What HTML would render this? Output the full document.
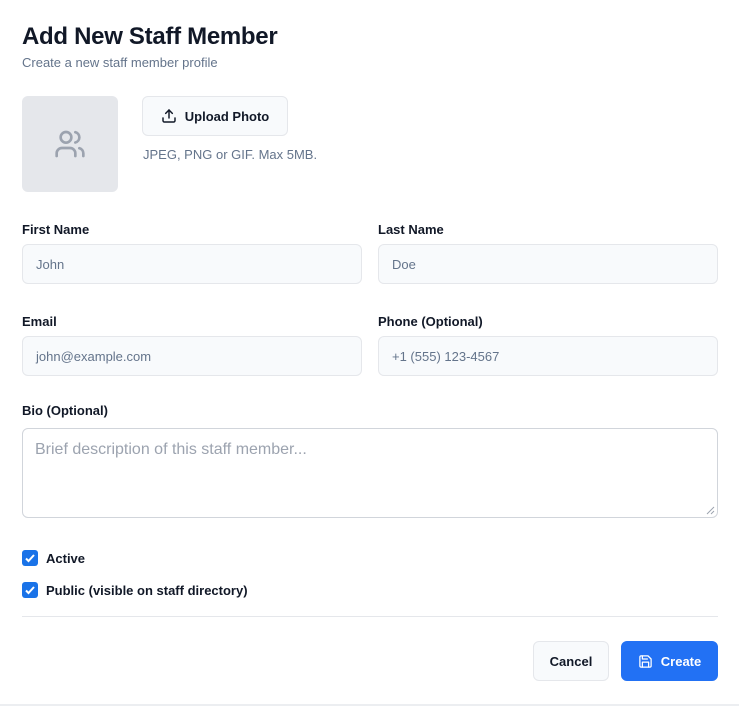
<!DOCTYPE html>
<html><head><style>
*{box-sizing:border-box;margin:0;padding:0}
body{width:739px;height:706px;background:#fff;font-family:"Liberation Sans",sans-serif;color:#111827;position:relative;overflow:hidden}
.a{position:absolute}
h1{position:absolute;left:22px;top:23px;font-size:24px;font-weight:700;letter-spacing:-0.3px}
.sub{left:22px;top:55px;font-size:13px;color:#64748b}
.av{left:22px;top:96px;width:96px;height:96px;background:#e5e7eb;border-radius:6px;display:flex;align-items:center;justify-content:center}
.btn{border:1px solid #e5e7eb;background:#f8fafc;border-radius:6px;font-size:13px;font-weight:700;display:flex;align-items:center;justify-content:center;gap:8px}
.lab{font-size:13px;font-weight:700}
.in{height:40px;border:1px solid #e5e7eb;background:#f8fafc;border-radius:6px;font-size:13px;color:#64748b;padding-left:13px;display:flex;align-items:center}
.cb{width:16px;height:16px;background:#1a73e8;border-radius:3px;display:flex;align-items:center;justify-content:center}
</style></head><body>
<h1>Add New Staff Member</h1>
<div class="a sub">Create a new staff member profile</div>
<div class="a av"><svg width="32" height="32" viewBox="0 0 24 24" fill="none" stroke="#9ca3af" stroke-width="2" stroke-linecap="round" stroke-linejoin="round"><path d="M16 21v-2a4 4 0 0 0-4-4H6a4 4 0 0 0-4 4v2"/><circle cx="9" cy="7" r="4"/><path d="M22 21v-2a4 4 0 0 0-3-3.87"/><path d="M16 3.13a4 4 0 0 1 0 7.75"/></svg></div>
<div class="a btn" style="left:142px;top:96px;width:146px;height:40px"><svg width="16" height="16" viewBox="0 0 24 24" fill="none" stroke="#111827" stroke-width="2.2" stroke-linecap="round" stroke-linejoin="round"><path d="M21 15v4a2 2 0 0 1-2 2H5a2 2 0 0 1-2-2v-4"/><path d="M17 8l-5-5-5 5"/><path d="M12 3v12"/></svg>Upload Photo</div>
<div class="a" style="left:143px;top:147px;font-size:13px;color:#64748b">JPEG, PNG or GIF. Max 5MB.</div>
<div class="a lab" style="left:22px;top:222px">First Name</div>
<div class="a lab" style="left:378px;top:222px">Last Name</div>
<div class="a in" style="left:22px;top:244px;width:340px">John</div>
<div class="a in" style="left:378px;top:244px;width:340px">Doe</div>
<div class="a lab" style="left:22px;top:314px">Email</div>
<div class="a lab" style="left:378px;top:314px">Phone (Optional)</div>
<div class="a in" style="left:22px;top:336px;width:340px">john@example.com</div>
<div class="a in" style="left:378px;top:336px;width:340px">+1 (555) 123-4567</div>
<div class="a lab" style="left:22px;top:403px">Bio (Optional)</div>
<div class="a" style="left:22px;top:428px;width:696px;height:90px;border:1px solid #d1d5db;border-radius:6px;padding:12px;font-size:16px;color:#9ca3af">Brief description of this staff member...</div>
<svg class="a" style="left:706px;top:506px" width="9" height="9" viewBox="0 0 9 9" stroke="#9ca3af"><path d="M1 8L8 1M5 8L8 5"/></svg>
<div class="a cb" style="left:22px;top:550px"><svg width="12" height="12" viewBox="0 0 12 12" fill="none" stroke="#fff" stroke-width="2"><path d="M2 6.5l2.5 2.5L10 3"/></svg></div>
<div class="a lab" style="left:46px;top:551px">Active</div>
<div class="a cb" style="left:22px;top:582px"><svg width="12" height="12" viewBox="0 0 12 12" fill="none" stroke="#fff" stroke-width="2"><path d="M2 6.5l2.5 2.5L10 3"/></svg></div>
<div class="a lab" style="left:46px;top:583px">Public (visible on staff directory)</div>
<div class="a" style="left:22px;top:616px;width:696px;height:1px;background:#e5e7eb"></div>
<div class="a btn" style="left:533px;top:641px;width:76px;height:40px">Cancel</div>
<div class="a btn" style="left:621px;top:641px;width:97px;height:40px;background:#2271f4;border-color:#2271f4;color:#fff"><svg width="15" height="15" viewBox="0 0 24 24" fill="none" stroke="#fff" stroke-width="2" stroke-linecap="round" stroke-linejoin="round"><path d="M19 21H5a2 2 0 0 1-2-2V5a2 2 0 0 1 2-2h11l5 5v11a2 2 0 0 1-2 2z"/><path d="M17 21v-8H7v8"/><path d="M7 3v5h8"/></svg>Create</div>
<div class="a" style="left:0;top:704px;width:739px;height:2px;background:#eceef1"></div>
</body></html>
